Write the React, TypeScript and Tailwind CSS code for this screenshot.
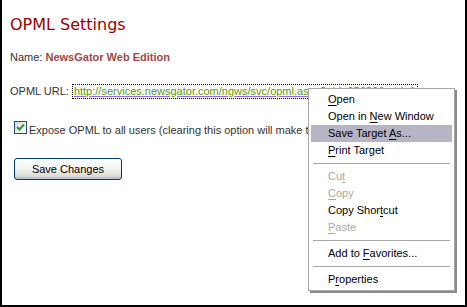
import React from "react";

const sans = "font-['Liberation_Sans',Arial,sans-serif]";

type Item = { label: React.ReactNode; disabled?: boolean; active?: boolean } | "sep";

const u = (s: string) => <span className="underline underline-offset-[2px]">{s}</span>;

const ITEMS: Item[] = [
  { label: <>{u("O")}pen</> },
  { label: <>Open in {u("N")}ew Window</> },
  { label: <>Save Target {u("A")}s...</>, active: true },
  { label: <>{u("P")}rint Target</> },
  "sep",
  { label: <>Cu{u("t")}</>, disabled: true },
  { label: <>{u("C")}opy</>, disabled: true },
  { label: <>Copy Shor{u("t")}cut</> },
  { label: <>{u("P")}aste</>, disabled: true },
  "sep",
  { label: <>Add to {u("F")}avorites...</> },
  "sep",
  { label: <>P{u("r")}operties</> },
];

function ContextMenu() {
  return (
    <div className="absolute left-[306px] top-[88px] w-[147px] border border-[#a7a6aa] bg-white p-[2px] shadow-[2px_2px_0_#8a8a8a]">
      {ITEMS.map((it, i) =>
        it === "sep" ? (
          <div key={i} className="flex h-[9px] items-center px-[2px]">
            <div className="h-px w-full bg-[#a7a6aa]" />
          </div>
        ) : (
          <div
            key={i}
            className={`h-[17px] whitespace-nowrap pl-[17px] text-[11px] leading-[17px] ${
              it.active ? "bg-[#b6b5c6]" : ""
            } ${it.disabled ? "text-[#aca899]" : "text-black"}`}
          >
            <span>{it.label}</span>
          </div>
        )
      )}
    </div>
  );
}

export default function App() {
  return (
    <div className={`relative h-[307px] w-[467px] overflow-hidden border-x-2 border-b-2 border-black bg-white ${sans}`}>
      <div className="flex flex-col pl-[8px] pt-[15px]">
        <h1 className="font-['DejaVu_Sans',Verdana,sans-serif] text-[16px] leading-[20px] text-[#990000]">
          OPML Settings
        </h1>

        <div className="mt-[15px] text-[11px] leading-[14px] text-[#333333]">
          Name: <span className="font-bold text-[#a04848]">NewsGator Web Edition</span>
        </div>

        <div className="mt-[20px] flex items-center gap-[3px] whitespace-nowrap text-[11px] leading-[13px] text-[#333333]">
          <span>OPML URL:</span>
          <span className="border border-dotted border-black px-px">
            <a className="text-[#5c9a00] underline decoration-[#9a66ff]">
              http://services.newsgator.com/ngws/svc/opml.aspx?uid=95630&amp;mid=1
            </a>
          </span>
        </div>

        <label className="mt-[22px] flex items-start gap-[2px] whitespace-nowrap pl-[4px] text-[11px] leading-[14px] text-[#333333]">
          <span className="flex h-[13px] w-[13px] shrink-0 items-center justify-center border border-[#1c5180] bg-gradient-to-br from-[#dcdcd6] to-white">
            <svg width="9" height="9" viewBox="0 0 9 9">
              <path d="M1 4 L3.5 6.5 L8 1.5" fill="none" stroke="#21a121" strokeWidth="2" />
            </svg>
          </span>
          <span className="mt-[2px]">Expose OPML to all users (clearing this option will make the OPML private)</span>
        </label>

        <div className="mt-[19px] pl-[4px]">
          <button className="h-[22px] w-[108px] rounded-[3px] border border-[#003c74] bg-gradient-to-b from-white via-[#f2f2f0] to-[#d6d0c5] text-[11px] text-black shadow-[inset_0_-2px_0_#b7c2dc]">
            Save Changes
          </button>
        </div>
      </div>

      <ContextMenu />
    </div>
  );
}
